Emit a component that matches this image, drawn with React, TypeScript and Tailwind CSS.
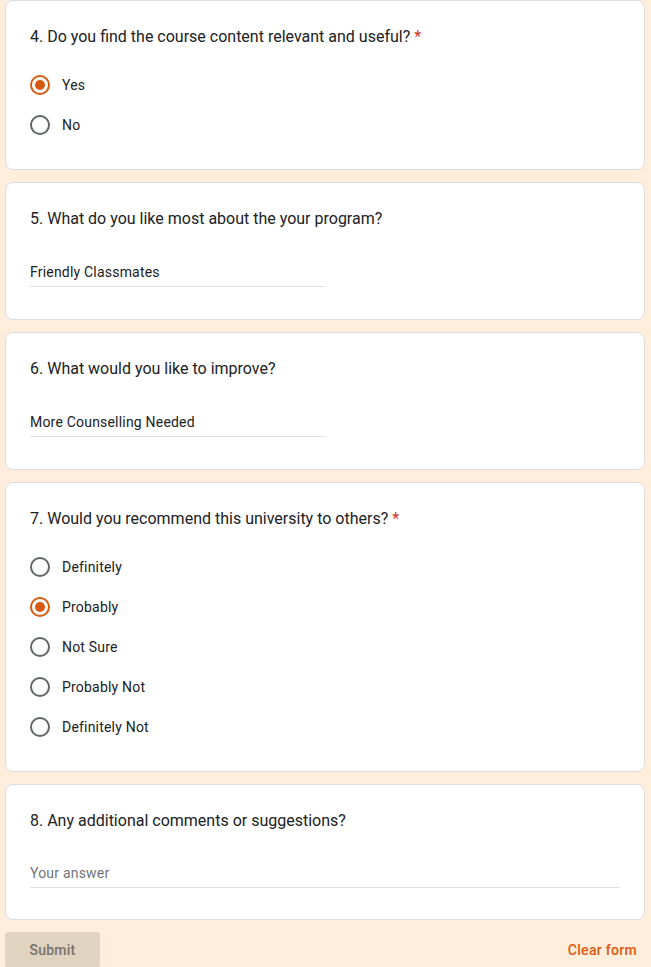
import React from 'react';

const font = { fontFamily: 'Roboto, "Liberation Sans", sans-serif' };

type Choice = { label: string; checked?: boolean };

const Radio = ({ checked }: { checked?: boolean }) => (
  <span
    className={`flex h-5 w-5 shrink-0 items-center justify-center rounded-full border-2 ${
      checked ? 'border-[#d65a0e]' : 'border-[#5f6368]'
    }`}
  >
    {checked && <span className="h-2.5 w-2.5 rounded-full bg-[#d65a0e]" />}
  </span>
);

const Question = ({ text, required }: { text: string; required?: boolean }) => (
  <div className="text-[16px] leading-6 text-[#202124]">
    {text}
    {required && <span className="ml-1 text-[#d93025]">*</span>}
  </div>
);

const Card = ({ children }: { children: React.ReactNode }) => (
  <div className="rounded-lg border border-[#dadce0] bg-white p-6">{children}</div>
);

const ChoiceCard = ({ text, choices, required }: { text: string; choices: Choice[]; required?: boolean }) => (
  <Card>
    <Question text={text} required={required} />
    <div className="mt-4 flex flex-col">
      {choices.map((c) => (
        <div key={c.label} className="flex h-10 items-center gap-3">
          <Radio checked={c.checked} />
          <span className="text-[14px] tracking-[0.2px] text-[#202124]">{c.label}</span>
        </div>
      ))}
    </div>
  </Card>
);

const TextCard = ({ text, answer, wide }: { text: string; answer?: string; wide?: boolean }) => (
  <Card>
    <Question text={text} />
    <div
      className={`border-b border-[#e0e0e0] pb-1 ${
        wide ? 'mt-[30px] mb-[7px] w-full' : 'mt-[31px] mb-2 w-[295px]'
      }`}
    >
      <div className={`text-[14px] leading-5 tracking-[0.2px] ${answer ? 'text-[#202124]' : 'text-[#70757a]'}`}>
        {answer ?? 'Your answer'}
      </div>
    </div>
  </Card>
);

export default function App() {
  return (
    <div className="min-h-screen bg-[#feeedb] pl-[5px] pr-[6px]" style={font}>
      <div className="flex flex-col gap-3">
        <ChoiceCard
          text="4. Do you find the course content relevant and useful?"
          required
          choices={[{ label: 'Yes', checked: true }, { label: 'No' }]}
        />
        <TextCard text="5. What do you like most about the your program?" answer="Friendly Classmates" />
        <TextCard text="6. What would you like to improve?" answer="More Counselling Needed" />
        <ChoiceCard
          text="7. Would you recommend this university to others?"
          required
          choices={[
            { label: 'Definitely' },
            { label: 'Probably', checked: true },
            { label: 'Not Sure' },
            { label: 'Probably Not' },
            { label: 'Definitely Not' },
          ]}
        />
        <TextCard text="8. Any additional comments or suggestions?" wide />
      </div>
      <div className="mt-3 flex items-center justify-between">
        <button className="h-9 w-[95px] rounded bg-[#e0d3c0] text-[14px] font-medium tracking-[0.25px] text-[#77726c]">
          Submit
        </button>
        <button className="mr-[8px] text-[14px] font-medium tracking-[0.3px] text-[#e0570f]">Clear form</button>
      </div>
    </div>
  );
}
